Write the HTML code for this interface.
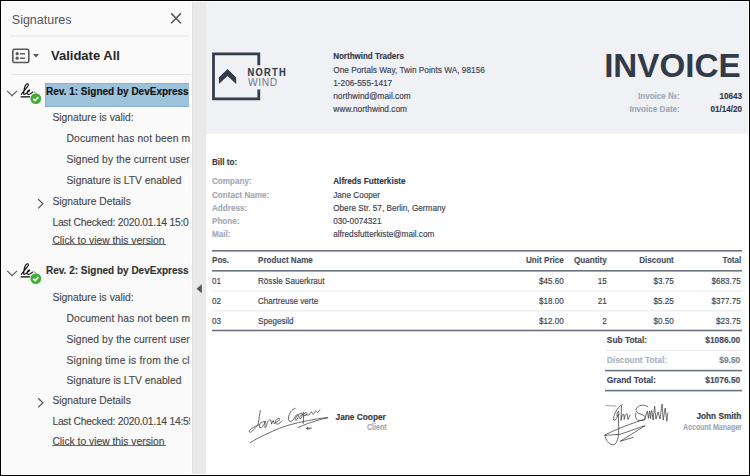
<!DOCTYPE html>
<html><head><meta charset="utf-8"><style>
html,body{margin:0;padding:0;}
body{width:750px;height:476px;position:relative;overflow:hidden;background:#000;font-family:"Liberation Sans",sans-serif;}
.t{position:absolute;white-space:pre;}
.abs{position:absolute;}
</style></head><body>
<div class="abs" style="left:1px;top:1px;width:748px;height:474px;background:#fff;"></div>
<div class="abs" style="left:2px;top:2px;width:189px;height:472px;background:#fafafa;"></div>
<div class="abs" style="left:192px;top:2px;width:14px;height:472px;background:#e9e9e9;border-left:1px solid #e2e2e2;box-sizing:border-box;"></div>
<div class="abs" style="left:206px;top:2px;width:542px;height:132px;background:#eff1f5;"></div>
<div class="t" style="left:11.80px;top:14.02px;font-size:12.5px;line-height:12.5px;font-weight:400;color:#555;">Signatures</div>
<svg class="abs" style="left:0;top:0" width="750" height="476" viewBox="0 0 750 476"><path d="M171.2 13.4L180.9 23.3M180.9 13.4L171.2 23.3" stroke="#585858" stroke-width="1.55" fill="none"/><rect x="11" y="35.5" width="177.5" height="1" fill="#e3e3e3"/><rect x="11" y="74" width="179" height="1" fill="#e6e6e6"/><rect x="12.8" y="49.3" width="16" height="13.2" rx="1.6" stroke="#585858" stroke-width="1.6" fill="none"/><circle cx="17.1" cy="53.7" r="1.6" fill="#585858"/><circle cx="17.1" cy="58.2" r="1.6" fill="#585858"/><rect x="20.1" y="53" width="4.9" height="1.45" fill="#585858"/><rect x="20.1" y="57.5" width="4.9" height="1.45" fill="#585858"/><path d="M33 54L39 54L36 57.4Z" fill="#585858"/><path d="M196.5 288.7L201.8 284.2L201.8 293.2Z" fill="#555"/></svg>
<div class="t" style="left:51.00px;top:48.90px;font-size:13px;line-height:13px;font-weight:700;color:#262626;">Validate All</div>
<div class="abs" style="left:0;top:0;width:190px;height:476px;overflow:hidden;">
<div class="abs" style="left:44.5px;top:83px;width:144.5px;height:23.5px;background:#9dc2dc;border:1px solid #8db2ce;border-right:none;box-sizing:border-box;"></div>
<svg class="abs" style="left:0;top:0px" width="60" height="120" viewBox="0 0 60 120"><path d="M7.2 90.9L12.1 95.7L17 90.9" stroke="#555" stroke-width="1.1" fill="none"/><path d="M21.4 94.3C23.5 91 27 87.5 28.2 85.5C28.8 84 27.8 83.5 26.8 84C25.2 85 24.3 88 24 90.5C23.8 92.5 23.4 94 24 94.5C25 94.8 27 92.5 28.8 91.2C29.8 90.5 29.8 89.8 29 90C28 90.3 27.2 91.8 27.1 93C27 94.5 28.5 94.6 30 94C31 93.5 32 92.5 32.7 92" stroke="#111" stroke-width="1.15" fill="none" stroke-linecap="round"/><circle cx="34.4" cy="92.1" r="0.5" fill="#333"/><circle cx="35.8" cy="92.4" r="0.5" fill="#333"/><rect x="20.6" y="96.2" width="9.4" height="1.3" fill="#111"/><circle cx="35.8" cy="98.6" r="6.2" fill="#fff"/><circle cx="35.8" cy="98.6" r="5.4" fill="#41ad33"/><path d="M33.2 98.8L35.2 100.5L38.4 97.2" stroke="#fff" stroke-width="1.75" fill="none"/></svg>
<div class="t" style="left:46.00px;top:86.53px;font-size:10px;line-height:10px;font-weight:700;color:#111;transform:scaleY(1.1);transform-origin:0 8.465px;-webkit-text-stroke:0.15px currentColor;">Rev. 1: Signed by DevExpress</div>
<div class="t" style="left:52.40px;top:112.88px;font-size:10.3px;line-height:10.3px;font-weight:400;color:#474747;-webkit-text-stroke:0.12px currentColor;transform:scaleY(1.05);transform-origin:0 8.72px;">Signature is valid:</div>
<div class="t" style="left:66.50px;top:133.68px;font-size:10.3px;line-height:10.3px;font-weight:400;color:#474747;letter-spacing:0.13px;-webkit-text-stroke:0.12px currentColor;transform:scaleY(1.05);transform-origin:0 8.72px;">Document has not been m</div>
<div class="t" style="left:66.50px;top:154.58px;font-size:10.3px;line-height:10.3px;font-weight:400;color:#474747;letter-spacing:0.1px;-webkit-text-stroke:0.12px currentColor;transform:scaleY(1.05);transform-origin:0 8.72px;">Signed by the current user</div>
<div class="t" style="left:66.50px;top:175.68px;font-size:10.3px;line-height:10.3px;font-weight:400;color:#474747;-webkit-text-stroke:0.12px currentColor;transform:scaleY(1.05);transform-origin:0 8.72px;">Signature is LTV enabled</div>
<div class="t" style="left:52.40px;top:197.38px;font-size:10.3px;line-height:10.3px;font-weight:400;color:#474747;-webkit-text-stroke:0.12px currentColor;transform:scaleY(1.05);transform-origin:0 8.72px;">Signature Details</div>
<div class="t" style="left:52.40px;top:218.08px;font-size:10.3px;line-height:10.3px;font-weight:400;color:#474747;letter-spacing:-0.24px;-webkit-text-stroke:0.12px currentColor;transform:scaleY(1.05);transform-origin:0 8.72px;">Last Checked: 2020.01.14 15:0</div>
<div class="t" style="left:52.40px;top:235.68px;font-size:10.3px;line-height:10.3px;font-weight:400;color:#474747;-webkit-text-stroke:0.12px currentColor;transform:scaleY(1.05);transform-origin:0 8.72px;">Click to view this version</div>
<svg class="abs" style="left:0;top:179.5px" width="60" height="120" viewBox="0 0 60 120"><path d="M7.2 90.9L12.1 95.7L17 90.9" stroke="#555" stroke-width="1.1" fill="none"/><path d="M21.4 94.3C23.5 91 27 87.5 28.2 85.5C28.8 84 27.8 83.5 26.8 84C25.2 85 24.3 88 24 90.5C23.8 92.5 23.4 94 24 94.5C25 94.8 27 92.5 28.8 91.2C29.8 90.5 29.8 89.8 29 90C28 90.3 27.2 91.8 27.1 93C27 94.5 28.5 94.6 30 94C31 93.5 32 92.5 32.7 92" stroke="#111" stroke-width="1.15" fill="none" stroke-linecap="round"/><circle cx="34.4" cy="92.1" r="0.5" fill="#333"/><circle cx="35.8" cy="92.4" r="0.5" fill="#333"/><rect x="20.6" y="96.2" width="9.4" height="1.3" fill="#111"/><circle cx="35.8" cy="98.6" r="6.2" fill="#fff"/><circle cx="35.8" cy="98.6" r="5.4" fill="#41ad33"/><path d="M33.2 98.8L35.2 100.5L38.4 97.2" stroke="#fff" stroke-width="1.75" fill="none"/></svg>
<div class="t" style="left:46.00px;top:266.04px;font-size:10px;line-height:10px;font-weight:700;color:#333;transform:scaleY(1.1);transform-origin:0 8.465px;-webkit-text-stroke:0.15px currentColor;">Rev. 2: Signed by DevExpress</div>
<div class="t" style="left:52.40px;top:292.98px;font-size:10.3px;line-height:10.3px;font-weight:400;color:#474747;-webkit-text-stroke:0.12px currentColor;transform:scaleY(1.05);transform-origin:0 8.72px;">Signature is valid:</div>
<div class="t" style="left:66.50px;top:313.68px;font-size:10.3px;line-height:10.3px;font-weight:400;color:#474747;letter-spacing:0.13px;-webkit-text-stroke:0.12px currentColor;transform:scaleY(1.05);transform-origin:0 8.72px;">Document has not been m</div>
<div class="t" style="left:66.50px;top:334.68px;font-size:10.3px;line-height:10.3px;font-weight:400;color:#474747;letter-spacing:0.1px;-webkit-text-stroke:0.12px currentColor;transform:scaleY(1.05);transform-origin:0 8.72px;">Signed by the current user</div>
<div class="t" style="left:66.50px;top:355.58px;font-size:10.3px;line-height:10.3px;font-weight:400;color:#474747;letter-spacing:0.2px;-webkit-text-stroke:0.12px currentColor;transform:scaleY(1.05);transform-origin:0 8.72px;">Signing time is from the cl</div>
<div class="t" style="left:66.50px;top:376.18px;font-size:10.3px;line-height:10.3px;font-weight:400;color:#474747;-webkit-text-stroke:0.12px currentColor;transform:scaleY(1.05);transform-origin:0 8.72px;">Signature is LTV enabled</div>
<div class="t" style="left:52.40px;top:396.08px;font-size:10.3px;line-height:10.3px;font-weight:400;color:#474747;-webkit-text-stroke:0.12px currentColor;transform:scaleY(1.05);transform-origin:0 8.72px;">Signature Details</div>
<div class="t" style="left:52.40px;top:416.68px;font-size:10.3px;line-height:10.3px;font-weight:400;color:#474747;letter-spacing:-0.24px;-webkit-text-stroke:0.12px currentColor;transform:scaleY(1.05);transform-origin:0 8.72px;">Last Checked: 2020.01.14 14:59</div>
<div class="t" style="left:52.40px;top:436.58px;font-size:10.3px;line-height:10.3px;font-weight:400;color:#474747;-webkit-text-stroke:0.12px currentColor;transform:scaleY(1.05);transform-origin:0 8.72px;">Click to view this version</div>
<svg class="abs" style="left:0;top:0" width="60" height="476" viewBox="0 0 60 476"><path d="M38.2 199.3L42.9 203.8L38.2 208.4" stroke="#555" stroke-width="1.2" fill="none"/><path d="M38.2 398.3L42.9 402.8L38.2 407.4" stroke="#555" stroke-width="1.2" fill="none"/></svg>
<div class="abs" style="left:52px;top:244px;width:114px;height:1px;background:#6a6a6a;"></div>
<div class="abs" style="left:52px;top:445px;width:114px;height:1px;background:#6a6a6a;"></div>
</div>
<svg class="abs" style="left:0;top:0" width="750" height="476" viewBox="0 0 750 476"><path d="M258.8 65.3L258.8 53.9L213.5 53.9L213.5 98.9L258.8 98.9L258.8 89.6" stroke="#363d4c" stroke-width="2.8" fill="none"/><path d="M218.9 77.6L227.5 68.9L236.2 77.5L236.2 84L227.5 76L218.9 84Z" fill="#333a48"/></svg>
<div class="t" style="left:247.60px;top:69.43px;font-size:9.3px;line-height:9.3px;font-weight:700;color:#333a48;letter-spacing:1.25px;transform:scaleY(1.18);transform-origin:0 7.87px;-webkit-text-stroke:0.15px currentColor;">NORTH</div>
<div class="t" style="left:248.00px;top:78.28px;font-size:10.3px;line-height:10.3px;font-weight:400;color:#737987;letter-spacing:0.55px;">WIND</div>
<div class="t" style="left:333.20px;top:52.83px;font-size:8px;line-height:8px;font-weight:700;color:#333a48;transform:scaleY(1.18);transform-origin:0 6.77px;-webkit-text-stroke:0.15px currentColor;">Northwind Traders</div>
<div class="t" style="left:333.20px;top:65.77px;font-size:8.3px;line-height:8.3px;font-weight:400;color:#3d4350;transform:scaleY(1.18);transform-origin:0 7.03px;-webkit-text-stroke:0.15px currentColor;">One Portals Way, Twin Points WA, 98156</div>
<div class="t" style="left:333.20px;top:78.97px;font-size:8.3px;line-height:8.3px;font-weight:400;color:#3d4350;transform:scaleY(1.18);transform-origin:0 7.03px;-webkit-text-stroke:0.15px currentColor;">1-206-555-1417</div>
<div class="t" style="left:333.20px;top:92.27px;font-size:8.3px;line-height:8.3px;font-weight:400;color:#3d4350;transform:scaleY(1.18);transform-origin:0 7.03px;-webkit-text-stroke:0.15px currentColor;">northwind@mail.com</div>
<div class="t" style="left:333.20px;top:105.47px;font-size:8.3px;line-height:8.3px;font-weight:400;color:#3d4350;transform:scaleY(1.18);transform-origin:0 7.03px;-webkit-text-stroke:0.15px currentColor;">www.northwind.com</div>
<div class="t" style="right:9.40px;top:49.30px;font-size:33.2px;line-height:33.2px;font-weight:700;color:#333a48;">INVOICE</div>
<div class="t" style="right:70.20px;top:92.64px;font-size:8.1px;line-height:8.1px;font-weight:700;color:#a3a9b7;transform:scaleY(1.18);transform-origin:0 6.86px;-webkit-text-stroke:0.15px currentColor;">Invoice №:</div>
<div class="t" style="right:8.00px;top:92.64px;font-size:8.1px;line-height:8.1px;font-weight:700;color:#333a48;transform:scaleY(1.18);transform-origin:0 6.86px;-webkit-text-stroke:0.15px currentColor;">10643</div>
<div class="t" style="right:70.20px;top:105.94px;font-size:8.1px;line-height:8.1px;font-weight:700;color:#a3a9b7;transform:scaleY(1.18);transform-origin:0 6.86px;-webkit-text-stroke:0.15px currentColor;">Invoice Date:</div>
<div class="t" style="right:8.00px;top:105.94px;font-size:8.1px;line-height:8.1px;font-weight:700;color:#333a48;transform:scaleY(1.18);transform-origin:0 6.86px;-webkit-text-stroke:0.15px currentColor;">01/14/20</div>
<div class="t" style="left:212.00px;top:158.74px;font-size:8.1px;line-height:8.1px;font-weight:700;color:#333a48;transform:scaleY(1.18);transform-origin:0 6.86px;-webkit-text-stroke:0.15px currentColor;">Bill to:</div>
<div class="t" style="left:212.00px;top:178.14px;font-size:8.1px;line-height:8.1px;font-weight:700;color:#a3a9b7;transform:scaleY(1.18);transform-origin:0 6.86px;-webkit-text-stroke:0.15px currentColor;">Company:</div>
<div class="t" style="left:333.20px;top:178.06px;font-size:8.2px;line-height:8.2px;font-weight:700;color:#333a48;transform:scaleY(1.18);transform-origin:0 6.94px;-webkit-text-stroke:0.15px currentColor;">Alfreds Futterkiste</div>
<div class="t" style="left:212.00px;top:191.74px;font-size:8.1px;line-height:8.1px;font-weight:700;color:#a3a9b7;transform:scaleY(1.18);transform-origin:0 6.86px;-webkit-text-stroke:0.15px currentColor;">Contact Name:</div>
<div class="t" style="left:333.20px;top:191.66px;font-size:8.2px;line-height:8.2px;font-weight:400;color:#3d4350;transform:scaleY(1.18);transform-origin:0 6.94px;-webkit-text-stroke:0.15px currentColor;">Jane Cooper</div>
<div class="t" style="left:212.00px;top:204.74px;font-size:8.1px;line-height:8.1px;font-weight:700;color:#a3a9b7;transform:scaleY(1.18);transform-origin:0 6.86px;-webkit-text-stroke:0.15px currentColor;">Address:</div>
<div class="t" style="left:333.20px;top:204.66px;font-size:8.2px;line-height:8.2px;font-weight:400;color:#3d4350;transform:scaleY(1.18);transform-origin:0 6.94px;-webkit-text-stroke:0.15px currentColor;">Obere Str. 57, Berlin, Germany</div>
<div class="t" style="left:212.00px;top:218.14px;font-size:8.1px;line-height:8.1px;font-weight:700;color:#a3a9b7;transform:scaleY(1.18);transform-origin:0 6.86px;-webkit-text-stroke:0.15px currentColor;">Phone:</div>
<div class="t" style="left:333.20px;top:218.06px;font-size:8.2px;line-height:8.2px;font-weight:400;color:#3d4350;transform:scaleY(1.18);transform-origin:0 6.94px;-webkit-text-stroke:0.15px currentColor;">030-0074321</div>
<div class="t" style="left:212.00px;top:231.34px;font-size:8.1px;line-height:8.1px;font-weight:700;color:#a3a9b7;transform:scaleY(1.18);transform-origin:0 6.86px;-webkit-text-stroke:0.15px currentColor;">Mail:</div>
<div class="t" style="left:333.20px;top:231.26px;font-size:8.2px;line-height:8.2px;font-weight:400;color:#3d4350;transform:scaleY(1.18);transform-origin:0 6.94px;-webkit-text-stroke:0.15px currentColor;">alfredsfutterkiste@mail.com</div>
<svg class="abs" style="left:0;top:0" width="750" height="476" viewBox="0 0 750 476"><rect x="212" y="250" width="530" height="1.6" fill="#6b7282"/><rect x="212" y="270" width="530" height="1.6" fill="#6b7282"/><rect x="212" y="290.5" width="530" height="1" fill="#e8e9ec"/><rect x="212" y="310.3" width="530" height="1" fill="#e8e9ec"/><rect x="212" y="329.7" width="530" height="1.6" fill="#6b7282"/><rect x="605" y="350" width="137" height="1" fill="#e8e9ec"/><rect x="605" y="369.8" width="137" height="1.6" fill="#6b7282"/><rect x="605" y="389.8" width="137" height="1.6" fill="#6b7282"/></svg>
<div class="t" style="left:212.00px;top:257.14px;font-size:8.1px;line-height:8.1px;font-weight:700;color:#4a5161;transform:scaleY(1.18);transform-origin:0 6.86px;-webkit-text-stroke:0.15px currentColor;">Pos.</div>
<div class="t" style="left:258.00px;top:257.14px;font-size:8.1px;line-height:8.1px;font-weight:700;color:#4a5161;transform:scaleY(1.18);transform-origin:0 6.86px;-webkit-text-stroke:0.15px currentColor;">Product Name</div>
<div class="t" style="right:186.20px;top:257.14px;font-size:8.1px;line-height:8.1px;font-weight:700;color:#4a5161;transform:scaleY(1.18);transform-origin:0 6.86px;-webkit-text-stroke:0.15px currentColor;">Unit Price</div>
<div class="t" style="right:143.20px;top:257.14px;font-size:8.1px;line-height:8.1px;font-weight:700;color:#4a5161;transform:scaleY(1.18);transform-origin:0 6.86px;-webkit-text-stroke:0.15px currentColor;">Quantity</div>
<div class="t" style="right:76.20px;top:257.14px;font-size:8.1px;line-height:8.1px;font-weight:700;color:#4a5161;transform:scaleY(1.18);transform-origin:0 6.86px;-webkit-text-stroke:0.15px currentColor;">Discount</div>
<div class="t" style="right:8.70px;top:257.14px;font-size:8.1px;line-height:8.1px;font-weight:700;color:#4a5161;transform:scaleY(1.18);transform-origin:0 6.86px;-webkit-text-stroke:0.15px currentColor;">Total</div>
<div class="t" style="left:212.00px;top:277.74px;font-size:8.1px;line-height:8.1px;font-weight:400;color:#3d4350;transform:scaleY(1.18);transform-origin:0 6.86px;-webkit-text-stroke:0.15px currentColor;">01</div>
<div class="t" style="left:258.00px;top:277.74px;font-size:8.1px;line-height:8.1px;font-weight:400;color:#3d4350;transform:scaleY(1.18);transform-origin:0 6.86px;-webkit-text-stroke:0.15px currentColor;">Rössle Sauerkraut</div>
<div class="t" style="right:186.20px;top:277.74px;font-size:8.1px;line-height:8.1px;font-weight:400;color:#3d4350;transform:scaleY(1.18);transform-origin:0 6.86px;-webkit-text-stroke:0.15px currentColor;">$45.60</div>
<div class="t" style="right:143.20px;top:277.74px;font-size:8.1px;line-height:8.1px;font-weight:400;color:#3d4350;transform:scaleY(1.18);transform-origin:0 6.86px;-webkit-text-stroke:0.15px currentColor;">15</div>
<div class="t" style="right:76.20px;top:277.74px;font-size:8.1px;line-height:8.1px;font-weight:400;color:#3d4350;transform:scaleY(1.18);transform-origin:0 6.86px;-webkit-text-stroke:0.15px currentColor;">$3.75</div>
<div class="t" style="right:9.20px;top:277.74px;font-size:8.1px;line-height:8.1px;font-weight:400;color:#3d4350;transform:scaleY(1.18);transform-origin:0 6.86px;-webkit-text-stroke:0.15px currentColor;">$683.75</div>
<div class="t" style="left:212.00px;top:297.74px;font-size:8.1px;line-height:8.1px;font-weight:400;color:#3d4350;transform:scaleY(1.18);transform-origin:0 6.86px;-webkit-text-stroke:0.15px currentColor;">02</div>
<div class="t" style="left:258.00px;top:297.74px;font-size:8.1px;line-height:8.1px;font-weight:400;color:#3d4350;transform:scaleY(1.18);transform-origin:0 6.86px;-webkit-text-stroke:0.15px currentColor;">Chartreuse verte</div>
<div class="t" style="right:186.20px;top:297.74px;font-size:8.1px;line-height:8.1px;font-weight:400;color:#3d4350;transform:scaleY(1.18);transform-origin:0 6.86px;-webkit-text-stroke:0.15px currentColor;">$18.00</div>
<div class="t" style="right:143.20px;top:297.74px;font-size:8.1px;line-height:8.1px;font-weight:400;color:#3d4350;transform:scaleY(1.18);transform-origin:0 6.86px;-webkit-text-stroke:0.15px currentColor;">21</div>
<div class="t" style="right:76.20px;top:297.74px;font-size:8.1px;line-height:8.1px;font-weight:400;color:#3d4350;transform:scaleY(1.18);transform-origin:0 6.86px;-webkit-text-stroke:0.15px currentColor;">$5.25</div>
<div class="t" style="right:9.20px;top:297.74px;font-size:8.1px;line-height:8.1px;font-weight:400;color:#3d4350;transform:scaleY(1.18);transform-origin:0 6.86px;-webkit-text-stroke:0.15px currentColor;">$377.75</div>
<div class="t" style="left:212.00px;top:317.74px;font-size:8.1px;line-height:8.1px;font-weight:400;color:#3d4350;transform:scaleY(1.18);transform-origin:0 6.86px;-webkit-text-stroke:0.15px currentColor;">03</div>
<div class="t" style="left:258.00px;top:317.74px;font-size:8.1px;line-height:8.1px;font-weight:400;color:#3d4350;transform:scaleY(1.18);transform-origin:0 6.86px;-webkit-text-stroke:0.15px currentColor;">Spegesild</div>
<div class="t" style="right:186.20px;top:317.74px;font-size:8.1px;line-height:8.1px;font-weight:400;color:#3d4350;transform:scaleY(1.18);transform-origin:0 6.86px;-webkit-text-stroke:0.15px currentColor;">$12.00</div>
<div class="t" style="right:143.20px;top:317.74px;font-size:8.1px;line-height:8.1px;font-weight:400;color:#3d4350;transform:scaleY(1.18);transform-origin:0 6.86px;-webkit-text-stroke:0.15px currentColor;">2</div>
<div class="t" style="right:76.20px;top:317.74px;font-size:8.1px;line-height:8.1px;font-weight:400;color:#3d4350;transform:scaleY(1.18);transform-origin:0 6.86px;-webkit-text-stroke:0.15px currentColor;">$0.50</div>
<div class="t" style="right:9.20px;top:317.74px;font-size:8.1px;line-height:8.1px;font-weight:400;color:#3d4350;transform:scaleY(1.18);transform-origin:0 6.86px;-webkit-text-stroke:0.15px currentColor;">$23.75</div>
<div class="t" style="left:606.80px;top:336.39px;font-size:8.4px;line-height:8.4px;font-weight:700;color:#3f4656;transform:scaleY(1.18);transform-origin:0 7.11px;-webkit-text-stroke:0.15px currentColor;">Sub Total:</div>
<div class="t" style="right:9.80px;top:336.39px;font-size:8.4px;line-height:8.4px;font-weight:700;color:#454c5c;transform:scaleY(1.18);transform-origin:0 7.11px;-webkit-text-stroke:0.15px currentColor;">$1086.00</div>
<div class="t" style="left:606.80px;top:356.39px;font-size:8.4px;line-height:8.4px;font-weight:700;color:#aeb3bf;transform:scaleY(1.18);transform-origin:0 7.11px;-webkit-text-stroke:0.15px currentColor;">Discount Total:</div>
<div class="t" style="right:9.80px;top:356.39px;font-size:8.4px;line-height:8.4px;font-weight:700;color:#7b8292;transform:scaleY(1.18);transform-origin:0 7.11px;-webkit-text-stroke:0.15px currentColor;">$9.50</div>
<div class="t" style="left:606.80px;top:376.49px;font-size:8.4px;line-height:8.4px;font-weight:700;color:#3f4656;transform:scaleY(1.18);transform-origin:0 7.11px;-webkit-text-stroke:0.15px currentColor;">Grand Total:</div>
<div class="t" style="right:9.80px;top:376.49px;font-size:8.4px;line-height:8.4px;font-weight:700;color:#454c5c;transform:scaleY(1.18);transform-origin:0 7.11px;-webkit-text-stroke:0.15px currentColor;">$1076.50</div>
<div class="t" style="right:364.20px;top:413.07px;font-size:8.3px;line-height:8.3px;font-weight:700;color:#333a48;transform:scaleY(1.18);transform-origin:0 7.03px;-webkit-text-stroke:0.15px currentColor;">Jane Cooper</div>
<div class="t" style="right:363.50px;top:424.47px;font-size:7px;line-height:7px;font-weight:700;color:#a3a9b7;transform:scaleY(1.18);transform-origin:0 5.93px;-webkit-text-stroke:0.15px currentColor;">Client</div>
<div class="t" style="right:8.70px;top:413.12px;font-size:8.25px;line-height:8.25px;font-weight:700;color:#333a48;transform:scaleY(1.18);transform-origin:0 6.98px;-webkit-text-stroke:0.15px currentColor;">John Smith</div>
<div class="t" style="right:8.20px;top:424.07px;font-size:7px;line-height:7px;font-weight:700;color:#a3a9b7;transform:scaleY(1.18);transform-origin:0 5.93px;-webkit-text-stroke:0.15px currentColor;">Account Manager</div>
<svg class="abs" style="left:0;top:0" width="750" height="476" viewBox="0 0 750 476"><g stroke="#3a3a3a" stroke-width="0.75" fill="none" stroke-linecap="round" stroke-linejoin="round"><path d="M260.4 410.4C259.6 414 258.8 420 258.2 424.1C257.5 426 256.5 427 255.6 427.6C254.5 428.8 253.2 430.2 252.1 431.1C251.2 432 250.2 432.6 249.9 432.4C249.2 432 249.1 431.3 249.4 430.7C250 429.8 250.8 429 251.6 428.5C253 427.4 254.8 426.5 256.5 425.8C257.5 425.3 258.6 424.8 259.6 424.5"/><path d="M265.3 421.4C263.5 421.6 261.2 422.3 260.4 423.2C259.6 424.5 259.2 426.5 259.6 427.6C260.5 427.8 261.8 427.3 262.6 426.7C263.8 425.2 264.8 422.8 265.3 421.4C265.2 423.5 264.8 426 264.9 427.6C265.2 427.8 265.8 427.2 266.2 426.7C266.8 425 267.3 422.5 267.9 421.4C268.6 420.6 269.8 419.6 270.6 419.7C271.2 420.8 271.2 423 271.5 424.1C272 422.8 272.6 421 273.2 420.5C273.8 421.5 273.8 423 274.1 423.6C275.5 423 277.3 421.8 278.5 421C279.2 420.3 279.6 418.8 279.4 418.3C278.5 418.2 277.4 418.7 276.8 419.2C276 420.2 275.4 421.6 275.4 422.7C275.8 423.7 276.8 424.2 277.7 424.1C279.3 423.8 280.8 422.3 282.1 421"/><path d="M295.2 408.3C292 409 289 413 288.4 418C288.3 421.5 290.5 422.5 293.3 419.8C294.5 418 295.8 414.5 297.5 414.3C299 415 298 420 295.8 420.2C294.5 419.5 296 416.5 298.2 415C299.5 414.2 301 412.8 302.2 413.2C302.8 415.5 301.5 419 299.8 418.8C299 417.5 300.5 415 302.6 414.2"/><path d="M303.6 412.3L303.3 423.5M303.6 414C304.6 412.5 306.6 412 306.9 413.5C306.6 415.5 304.6 416 303.9 415.5C305.5 414.5 307.5 414.8 308.8 415.2C310 414 310.8 412 311.5 411.7C312 412.5 312.5 414.4 313.2 414.4C314.2 413 315 411 315.9 410.8C316.5 411.5 317 412.6 317.7 412.6C318.5 411.5 319 410.5 319.8 409.8"/><path d="M250.3 442.6C256 439 261 436.5 267 433.8C275 430 282 427 289.1 425C302 421.5 315 419 327.4 417.4"/><path d="M298.2 427.6C303 425.5 307 423.5 311.5 422.3C317 420.5 322 418.8 327.8 417.9"/><path d="M306.2 428.5C308 428.3 310 428 311.5 428M307.8 427L307 429C308.2 429.6 309.5 429 310 428.5"/></g><g stroke="#3a3a3a" stroke-width="0.75" fill="none" stroke-linecap="round" stroke-linejoin="round"><path d="M606 405.5C609 405.8 612.5 406.1 616.1 406" stroke-width="0.5"/><path d="M622.2 404.5C620 405.5 617 409 615.5 412C614 415 613.3 418 613.8 420C614.8 421.5 617 418 618.2 414.5C618.6 420 618.8 428 618.6 433.3C618.3 438 617.5 442 614.5 444.6C611 445.5 607.5 442.5 606 439C604.8 436 605 434.5 605.2 434.8"/><path d="M618.5 411C617 412 616.5 415 617.5 416.5C619 416 619.5 413.5 618.5 411.5M621.5 406L621 420.5C621.5 417 622.5 414 623.5 414C624.3 414.5 624 418 624.2 419.5C625 416 626 413.5 627 413.8C627.8 414.8 627.2 418 628 419.5C628.8 418 629.5 416 630 415"/><path d="M605 434.8C615 430 628 424.5 640.3 420.7C643 420 644 419.7 645.1 419.6"/><path d="M605 435.3C610 435 615 434.6 620.2 434.3C627 432 634 429.5 640.3 427.2C642 426.6 643.5 426.1 645.1 425.7L620.2 441.3C625 440 629 438.5 633.3 437.3"/><path d="M647.9 406.8C645 404.5 640 404.5 637.2 407.5C635.2 410 636 412.5 639 413.5C642 414.5 645.5 416 645.5 418C644.5 420.5 640 421 637.5 420C635.5 419 635.3 416 635.8 413"/><path d="M644.5 419C645.5 417 646.5 413 647.3 411C647.8 413 648 416.5 648.4 418.4C649 415 649.2 412 649.7 411C650 413 650.2 416.5 650.5 418.4C651 415 651.2 412 651.6 410.5C652.2 413 652.6 417 653.1 420C653.6 415 654.2 409 654.7 406.3C655 410 655.5 415 656 419C656.8 416 657.5 413 658.2 412C658.8 414 659.2 417 660 419C660.8 413 661.5 407 662.2 404C662.5 410 662.8 416 663.3 420C664 415 664.7 410 665.3 408C665.8 413 666.3 418 666.8 421.2C667.2 418 667.5 415 667.8 413.1"/></g></svg>
</body></html>
